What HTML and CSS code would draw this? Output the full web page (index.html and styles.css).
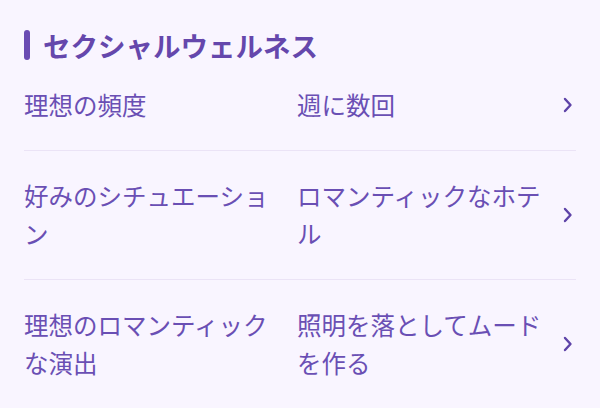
FILE: index.html
```html
<!DOCTYPE html>
<html lang="ja">
<head>
  <meta charset="UTF-8">
  <meta name="viewport" content="width=device-width, initial-scale=1.0">
  <title>セクシャルウェルネス</title>
  <link rel="stylesheet" href="styles.css">
</head>
<body>
  <!-- Section: sexual wellness preferences -->
  <section class="section">
    <h2 class="section-title">セクシャルウェルネス</h2>

    <div class="row">
      <div class="row-label">理想の頻度</div>
      <div class="row-value">週に数回</div>
      <svg class="chevron" viewBox="0 0 16 16" width="16" height="16"><path d="M5 2 L10.5 8 L5 14" fill="none" stroke="currentColor" stroke-width="2.4" stroke-linecap="round" stroke-linejoin="round"/></svg>
    </div>

    <div class="row">
      <div class="row-label">好みのシチュエーション</div>
      <div class="row-value">ロマンティックなホテル</div>
      <svg class="chevron" viewBox="0 0 16 16" width="16" height="16"><path d="M5 2 L10.5 8 L5 14" fill="none" stroke="currentColor" stroke-width="2.4" stroke-linecap="round" stroke-linejoin="round"/></svg>
    </div>

    <div class="row">
      <div class="row-label">理想のロマンティックな演出</div>
      <div class="row-value">照明を落としてムードを作る</div>
      <svg class="chevron" viewBox="0 0 16 16" width="16" height="16"><path d="M5 2 L10.5 8 L5 14" fill="none" stroke="currentColor" stroke-width="2.4" stroke-linecap="round" stroke-linejoin="round"/></svg>
    </div>
  </section>
</body>
</html>
```

FILE: styles.css
```css
body {
  margin: 0;
  background-color: #f9f5ff;
  color: #6a4fb4;
  font-family: "Noto Sans CJK JP", "Noto Sans", sans-serif;
}

.section {
  padding: 30px 24px 0;
}

/* Title with accent bar */
.section-title {
  display: flex;
  align-items: center;
  gap: 13px;
  margin: 0;
  font-size: 27.5px;
  line-height: 30px;
  font-weight: 700;
  color: #6547ac;
}

.section-title::before {
  content: "";
  width: 6px;
  height: 30px;
  border-radius: 3px;
  background-color: #6a4bb3;
}

.row {
  display: flex;
  align-items: center;
  padding: 26px 0;
  font-size: 24.5px;
  line-height: 38px;
  border-bottom: 1px solid #ebe3f6;
}

.row:last-child {
  border-bottom: none;
}

.row-label {
  flex: 1;
  padding-right: 18px;
}

.row-value {
  flex: 1;
}

.chevron {
  flex: none;
  margin-left: 8px;
  color: #5e43a8;
}
```
